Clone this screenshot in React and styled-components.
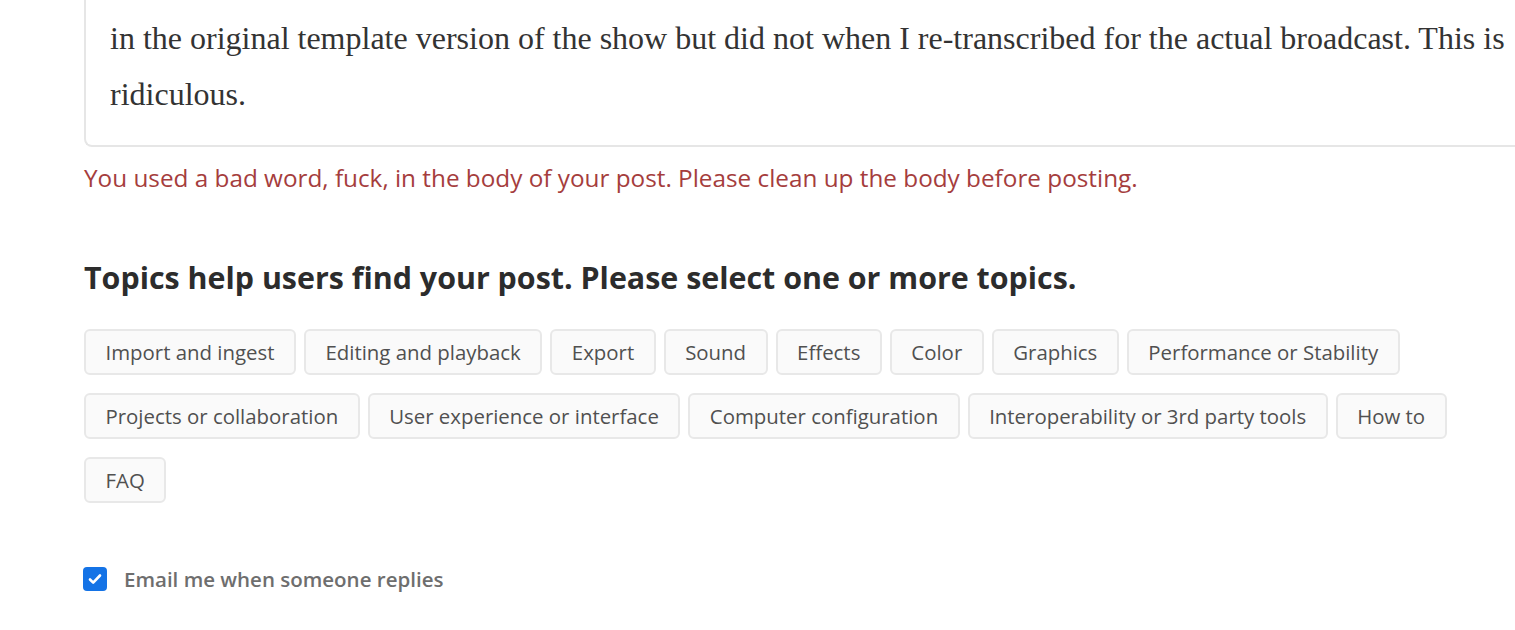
import { createGlobalStyle } from 'styled-components'
import { styled } from 'styled-components'

const GlobalStyle = createGlobalStyle`
  html, body {
    margin: 0;
    padding: 0;
    background: #fff;
    overflow: hidden;
  }
`

const Page = styled.div`
  width: 1515px;
  height: 630px;
  overflow: hidden;
  padding-left: 84px;
  box-sizing: border-box;
  font-family: 'Open Sans', 'Noto Sans', sans-serif;
`

const Editor = styled.div`
  width: 1520px;
  margin-top: -46px;
  border: 2px solid #e6e6e6;
  border-top: none;
  border-right: none;
  border-radius: 0 0 0 8px;
  padding: 0 0 23px 24px;
  box-sizing: border-box;
  font-family: 'Liberation Serif', 'Times New Roman', serif;
  font-size: 32px;
  line-height: 56px;
  color: #333;
  white-space: nowrap;
`

const ErrorText = styled.p`
  margin: 16px 0 0;
  color: #a53d3d;
  font-size: 24.3px;
  line-height: 30px;
`

const Heading = styled.h2`
  margin: 65px 0 0;
  font-size: 30.4px;
  font-weight: 700;
  line-height: 40px;
  color: #2c2c2c;
`

const TagList = styled.div`
  display: flex;
  flex-wrap: wrap;
  gap: 18px 8px;
  margin-top: 31px;
  width: 1380px;
`

const Tag = styled.button`
  height: 46px;
  padding: 0 19.5px;
  border: 2px solid #e8e8e8;
  border-radius: 6px;
  background: #fafafa;
  color: #505050;
  font-family: inherit;
  font-size: 20.4px;
  cursor: pointer;
`

const CheckRow = styled.label`
  display: flex;
  align-items: center;
  gap: 17px;
  margin-top: 62px;
  margin-left: -1px;
  color: #6e6e6e;
  font-size: 20.5px;
  font-weight: 600;
`

const Box = styled.span`
  flex: none;
  width: 24px;
  height: 24px;
  border-radius: 4px;
  background: #1473e6;
  display: flex;
  align-items: center;
  justify-content: center;
`

const topics = [
  'Import and ingest',
  'Editing and playback',
  'Export',
  'Sound',
  'Effects',
  'Color',
  'Graphics',
  'Performance or Stability',
  'Projects or collaboration',
  'User experience or interface',
  'Computer configuration',
  'Interoperability or 3rd party tools',
  'How to',
  'FAQ'
]

export default function App() {
  return (
    <Page>
      <GlobalStyle />
      <Editor>
        The captions randomly appeared with the offending word in them, which they did and then dropped
        <br />
        in the original template version of the show but did not when I re-transcribed for the actual broadcast. This is
        <br />
        ridiculous.
      </Editor>
      <ErrorText>
        You used a bad word, fuck, in the body of your post. Please clean up the body before posting.
      </ErrorText>
      <Heading>Topics help users find your post. Please select one or more topics.</Heading>
      <TagList>
        {topics.map(t => (
          <Tag key={t}>{t}</Tag>
        ))}
      </TagList>
      <CheckRow>
        <Box>
          <svg width="16" height="16" viewBox="0 0 16 16">
            <path d="M3 8.5l3.2 3.2L13 4.5" fill="none" stroke="#fff" strokeWidth="2.6" strokeLinecap="round" strokeLinejoin="round" />
          </svg>
        </Box>
        Email me when someone replies
      </CheckRow>
    </Page>
  )
}
